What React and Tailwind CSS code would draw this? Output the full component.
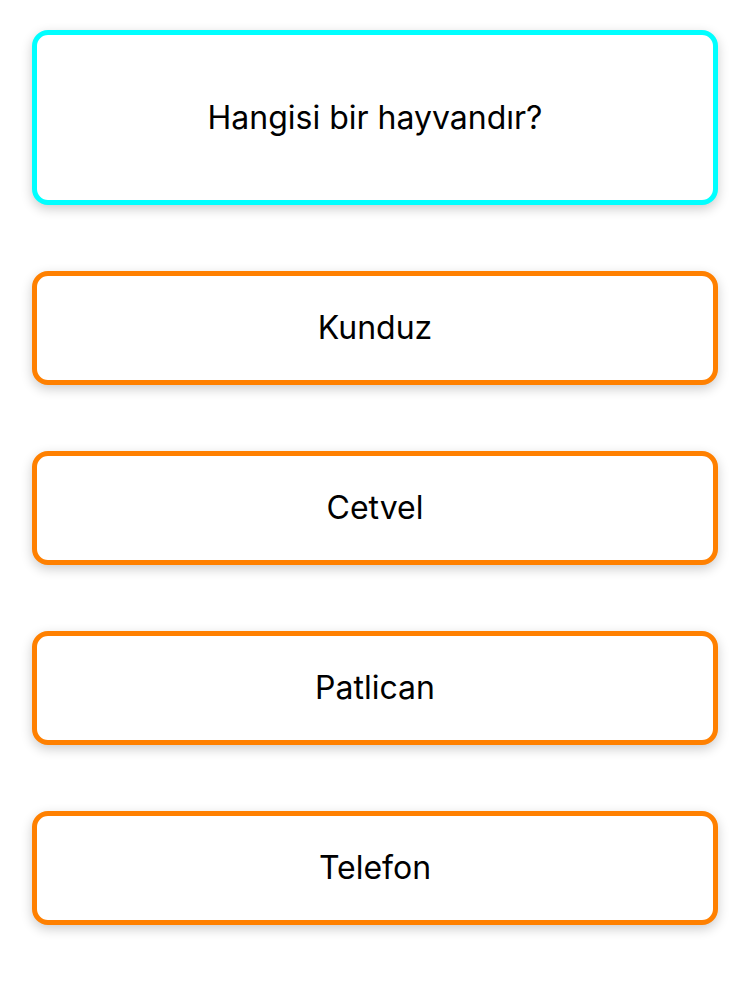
export default function App() {
  const answers = ["Kunduz", "Cetvel", "Patlican", "Telefon"];
  return (
    <div className="w-[750px] h-[984px] bg-white px-[32px] pt-[30px] flex flex-col gap-[66px]" style={{ fontFamily: "Inter, 'Noto Sans', sans-serif" }}>
      <div className="h-[175px] border-[5px] border-[#00ffff] rounded-[16px] bg-white flex items-center justify-center shadow-[0_4px_12px_rgba(0,0,0,0.2)]">
        <span className="text-[32px] text-black">Hangisi bir hayvandır?</span>
      </div>
      {answers.map((a) => (
        <div key={a} className="h-[114px] border-[5px] border-[#ff8000] rounded-[16px] bg-white flex items-center justify-center shadow-[0_4px_12px_rgba(0,0,0,0.2)]">
          <span className="text-[32px] text-black">{a}</span>
        </div>
      ))}
    </div>
  );
}
